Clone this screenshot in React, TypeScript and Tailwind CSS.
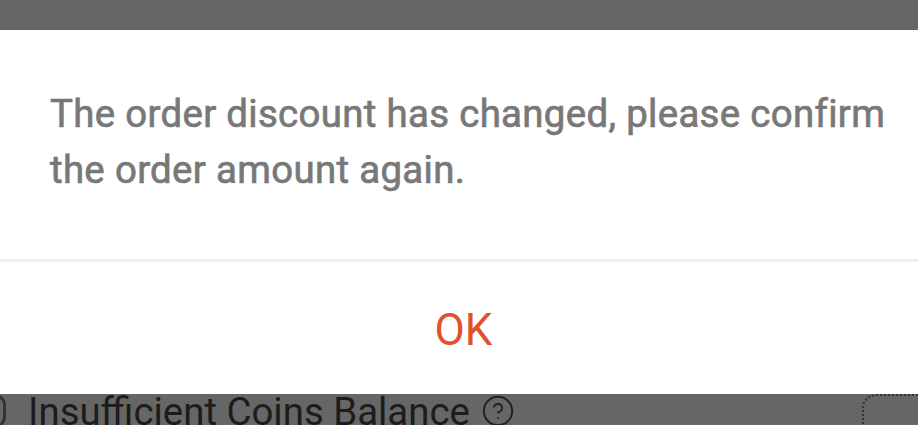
import React from 'react';
import { CircleHelp } from 'lucide-react';

const App: React.FC = () => {
  return (
    <div className="w-[918px] h-[425px] overflow-hidden bg-[#666666] flex flex-col font-['Roboto',sans-serif]">
      <div className="h-[30px] shrink-0 bg-[#666666]" />

      {/* Dialog */}
      <div className="bg-white h-[364px] shrink-0 flex flex-col">
        <div className="h-[229px] px-[50px] pt-[56px]">
          <p className="text-[38.4px] leading-[56px] tracking-[0.33px] font-normal text-[#787878] [-webkit-text-stroke:0.7px_#787878] whitespace-nowrap">
            The order discount has changed, please confirm
            <br />
            the order amount again.
          </p>
        </div>
        <div className="h-[3px] bg-[#eeeeee]" />
        <div className="flex-1 flex items-center justify-center pl-[9px] pt-[3px] text-[44px] text-[#e4502e]">OK</div>
      </div>

      {/* Row behind the overlay */}
      <div className="relative flex-1 pl-[28px] flex items-start gap-[11px] text-[38.4px] text-[#1c1c1c] leading-[36px] whitespace-nowrap">
        <div className="absolute left-[-16px] top-0 w-[22px] h-[34px] rounded-full border-[3px] border-[#333333]" />
        <span>Insufficient Coins Balance</span>
        <CircleHelp size={34} strokeWidth={1.4} className="text-[#222222] shrink-0" />
        <div className="absolute left-[862px] top-0 w-[80px] h-[31px] rounded-tl-[14px] border-l-2 border-t-2 border-dotted border-[#333333]" />
      </div>
    </div>
  );
};

export default App;
